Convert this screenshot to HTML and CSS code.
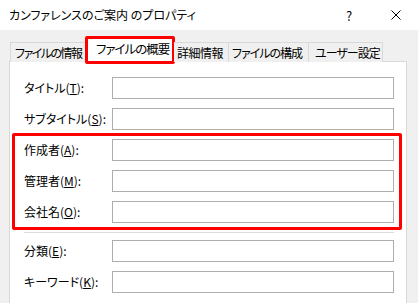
FILE: index.html
```html
<!DOCTYPE html>
<html lang="ja">
  <head>
    <meta charset="UTF-8" />
    <title>カンファレンスのご案内 のプロパティ</title>
    <link rel="stylesheet" href="styles.css">
  </head>
  <body>
    <!-- Title bar -->
    <div class="titlebar">
      <span class="title-text">カンファレンスのご案内 のプロパティ</span>
      <span class="title-help">?</span>
      <span class="title-close">
        <svg width="10" height="10" viewBox="0 0 10 10">
          <path d="M0.5 0.5 L9.5 9.5 M9.5 0.5 L0.5 9.5" stroke="#000" stroke-width="1" fill="none" />
        </svg>
      </span>
    </div>

    <!-- Tabs -->
    <div class="tabs">
      <div class="tab tab-info">ファイルの情報</div>
      <div class="tab tab-summary active">ファイルの概要</div>
      <div class="tab tab-detail">詳細情報</div>
      <div class="tab tab-struct">ファイルの構成</div>
      <div class="tab tab-user">ユーザー設定</div>
    </div>

    <!-- Panel -->
    <div class="panel">
      <div class="row">
        <label>タイトル(<u>T</u>):</label>
        <input type="text" />
      </div>
      <div class="row">
        <label>サブタイトル(<u>S</u>):</label>
        <input type="text" />
      </div>

      <div class="group">
        <div class="row">
          <label>作成者(<u>A</u>):</label>
          <input type="text" />
        </div>
        <div class="row">
          <label>管理者(<u>M</u>):</label>
          <input type="text" />
        </div>
        <div class="row">
          <label>会社名(<u>O</u>):</label>
          <input type="text" />
        </div>
      </div>

      <div class="separator"></div>

      <div class="row">
        <label>分類(<u>E</u>):</label>
        <input type="text" />
      </div>
      <div class="row">
        <label>キーワード(<u>K</u>):</label>
        <input type="text" />
      </div>
    </div>
  </body>
</html>
```

FILE: styles.css
```css
body {
  margin: 0;
  padding: 0;
  background: #f0f0f0;
  font-family: "Noto Sans CJK JP", "Noto Sans", sans-serif;
  font-size: 12px;
  font-feature-settings: "palt";
  color: #000;
  height: 303px;
  overflow: hidden;
}

/* Title bar */
.titlebar {
  height: 30px;
  background: #ffffff;
  display: flex;
  align-items: center;
  padding-left: 9px;
}

.title-text {
  flex: 1;
  line-height: 1;
}

.title-help {
  width: 45px;
  line-height: 1;
  font-size: 13px;
}

.title-close {
  width: 27px;
  display: flex;
  align-items: center;
}

/* Tabs */
.tabs {
  display: flex;
  align-items: flex-end;
  height: 32px;
  padding-left: 10px;
  position: relative;
  z-index: 2;
  margin-bottom: -1px;
}

.tab {
  height: 20px;
  box-sizing: border-box;
  border: 1px solid #d9d9d9;
  border-bottom: none;
  background: #f0f0f0;
  display: flex;
  align-items: center;
  padding-left: 4px;
  white-space: nowrap;
  overflow: hidden;
  line-height: 1;
  letter-spacing: -1px;
}

.tab + .tab {
  border-left: none;
}

.tab-info { width: 76px; letter-spacing: -1.5px; }
.tab-detail { width: 55px; padding-left: 3px; letter-spacing: -0.5px; }
.tab-struct { width: 80px; padding-left: 3px; }
.tab-user { width: 74px; padding-left: 6px; }

.tab.active {
  width: 90px;
  height: 28px;
  margin-left: -1px;
  margin-right: -1px;
  margin-bottom: -2px;
  border: 3px solid #ff0000;
  border-radius: 2px;
  background: #ffffff;
  padding-left: 8px;
  padding-bottom: 2px;
  font-size: 12.5px;
}

/* Panel */
.panel {
  margin-left: 9px;
  width: 398px;
  height: 242px;
  box-sizing: border-box;
  background: #ffffff;
  border: 1px solid #d9d9d9;
  border-bottom: none;
  padding: 15px 0 0 14px;
  overflow: hidden;
}

.row {
  display: flex;
  align-items: center;
  height: 22px;
  margin-bottom: 9px;
}

.row label {
  width: 88px;
  line-height: 1;
}

.row input {
  width: 282px;
  height: 22px;
  box-sizing: border-box;
  border: 1px solid #adadad;
  border-radius: 0;
  background: #ffffff;
  margin: 0;
  padding: 0;
}

/* Highlighted group */
.group {
  position: relative;
}

.group::after {
  content: "";
  position: absolute;
  left: -12px;
  top: -6px;
  width: 384px;
  height: 91px;
  border: 3px solid #ff0000;
  border-radius: 2px;
  pointer-events: none;
}

.separator {
  width: 370px;
  height: 1px;
  background: #dcdcdc;
  margin-top: 4px;
  margin-bottom: 7px;
}
```
